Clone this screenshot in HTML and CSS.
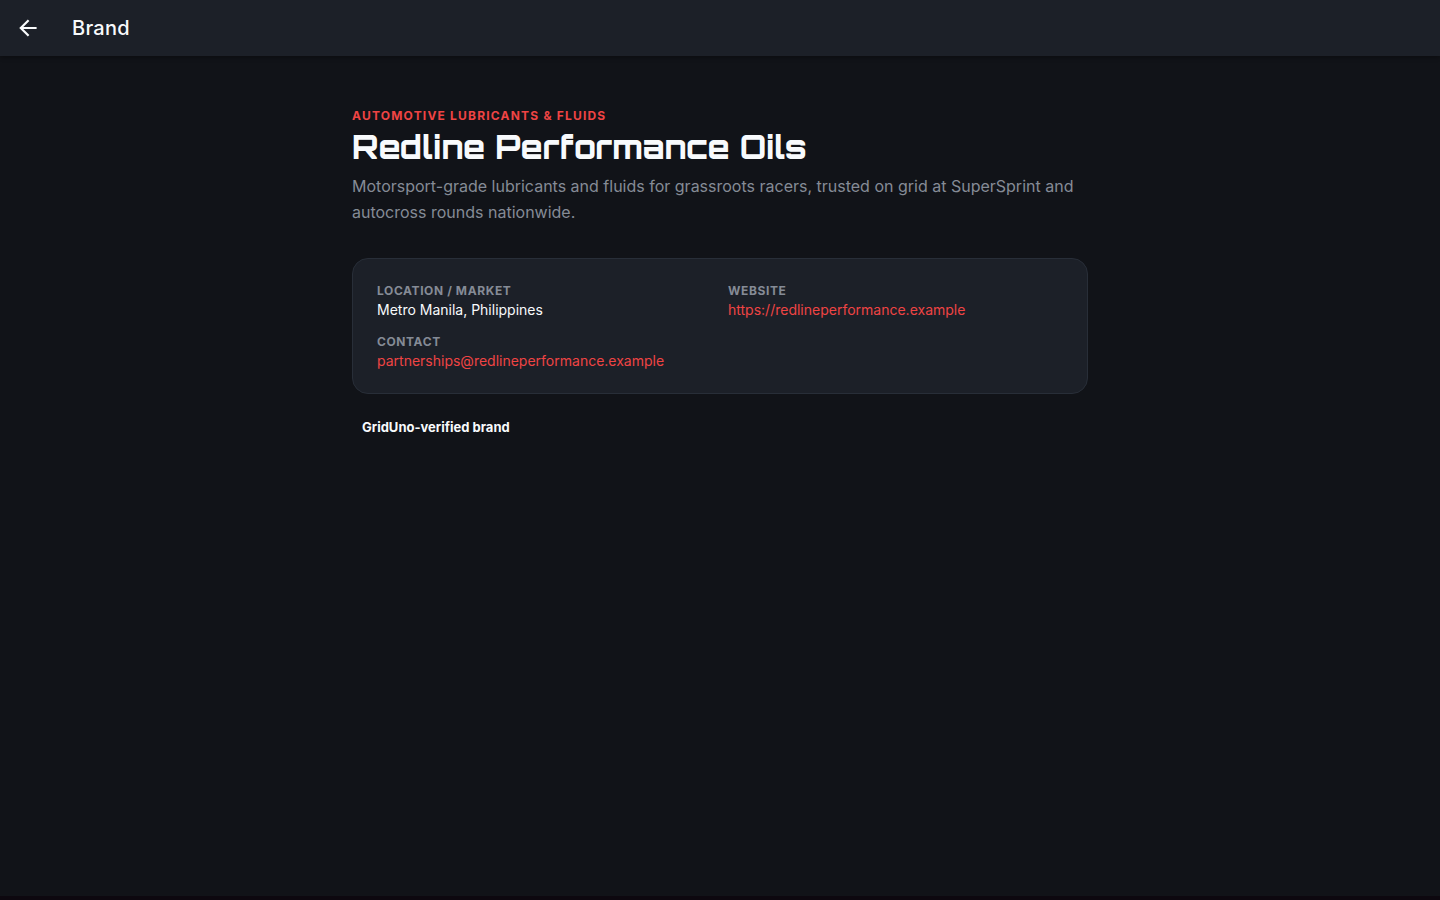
FILE: index.html
```html
<!DOCTYPE html>
<html lang="en">
<head>
    <meta charset="UTF-8">
    <meta name="viewport" content="width=device-width, initial-scale=1.0">
    <title>Brand</title>
    <link rel="stylesheet" href="styles.css">
</head>
<body>
    <header class="appbar">
        <button type="button" class="back" aria-label="Back">
            <svg viewBox="0 0 24 24" width="24" height="24" fill="none" stroke="currentColor" stroke-width="2.2"><path d="M20.6 12H5M12.6 4.2L4.8 12l7.8 7.8"/></svg>
        </button>
        <h2 class="appbar-title">Brand</h2>
    </header>

    <main class="content">
        <p class="category">Automotive Lubricants &amp; Fluids</p>
        <h1 class="name">Redline Performance Oils</h1>
        <p class="about">Motorsport-grade lubricants and fluids for grassroots racers, trusted on grid at SuperSprint and autocross rounds nationwide.</p>

        <dl class="card">
            <div class="item">
                <dt>Location / Market</dt>
                <dd>Metro Manila, Philippines</dd>
            </div>
            <div class="item">
                <dt>Website</dt>
                <dd><a href="https://redlineperformance.example">https://redlineperformance.example</a></dd>
            </div>
            <div class="item">
                <dt>Contact</dt>
                <dd><a href="mailto:partnerships@redlineperformance.example">partnerships@redlineperformance.example</a></dd>
            </div>
        </dl>

        <p class="verified">GridUno-verified brand</p>
    </main>
</body>
</html>
```
FILE: styles.css
```css
* {
  box-sizing: border-box;
}

body {
  margin: 0;
  min-height: 100vh;
  display: flex;
  flex-direction: column;
  background-color: #111318;
  border-bottom: 4px solid #0d080f;
  color: #f8fafc;
  font-family: Inter, sans-serif;
}

h1, h2, p, dl, dd {
  margin: 0;
}

.appbar {
  display: flex;
  align-items: center;
  gap: 16px;
  height: 56px;
  background-color: #1c2028;
  box-shadow: 0 2px 4px rgba(0, 0, 0, 0.3);
}

.back {
  display: flex;
  align-items: center;
  justify-content: center;
  width: 56px;
  height: 56px;
  padding: 0;
  border: 0;
  background: none;
  color: #f8fafc;
  cursor: pointer;
}

.appbar-title {
  font-size: 20px;
  font-weight: 500;
  letter-spacing: 0.0125em;
}

.content {
  width: 100%;
  max-width: 784px;
  margin: 0 auto;
  padding: 48px 24px;
}

.category {
  color: #ef4444;
  font-size: 12px;
  font-weight: 700;
  line-height: 24px;
  letter-spacing: 0.1em;
  text-transform: uppercase;
}

.name {
  font-family: Orbitron, Inter, sans-serif;
  font-size: 32px;
  font-weight: 800;
  line-height: 38px;
}

.about {
  margin-top: 7px;
  color: #858b96;
  font-size: 16px;
  line-height: 26px;
}

.card {
  display: grid;
  grid-template-columns: 1fr 1fr;
  gap: 16px;
  margin-top: 33px;
  padding: 24px;
  background-color: #1c2028;
  border: 1px solid #282e38;
  border-radius: 16px;
}

.item dt {
  margin-bottom: 4px;
  color: #858b96;
  font-size: 12px;
  font-weight: 700;
  line-height: 15px;
  letter-spacing: 0.05em;
  text-transform: uppercase;
}

.item dd {
  font-size: 14px;
  line-height: 16px;
}

.item a {
  color: #ef4444;
  text-decoration: none;
}

.verified {
  margin-top: 24px;
  padding: 0 10px;
  font-size: 13px;
  font-weight: 700;
  line-height: 18px;
}
```
